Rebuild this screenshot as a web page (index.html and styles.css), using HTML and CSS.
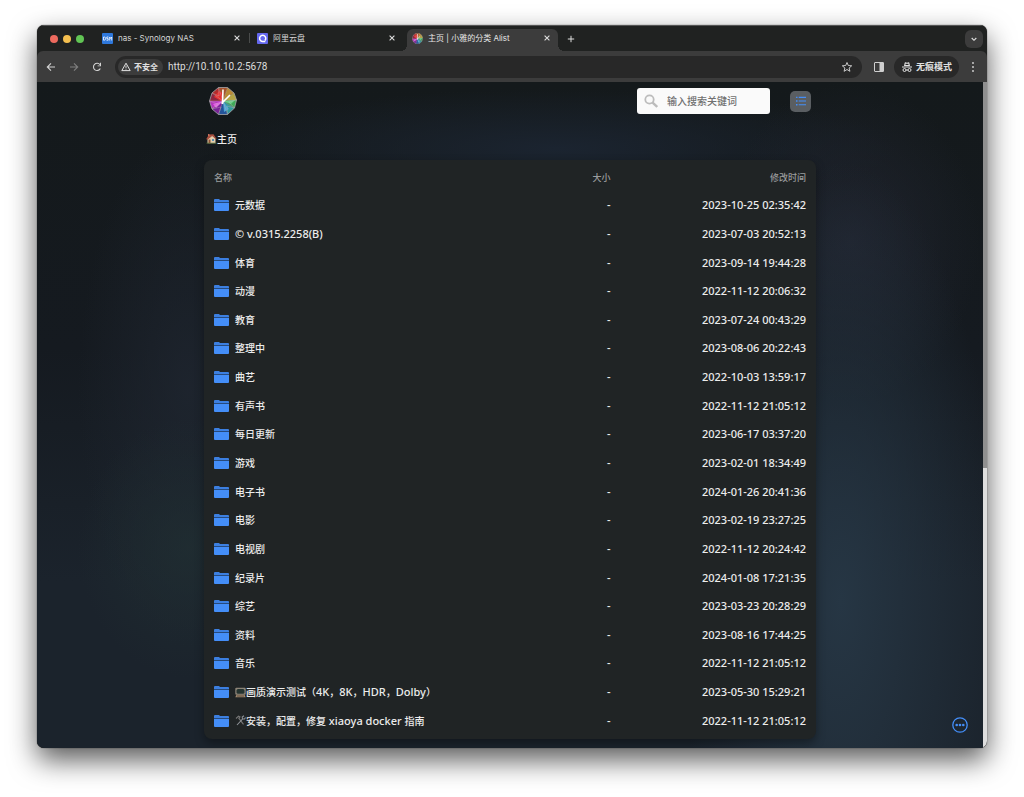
FILE: index.html
```html
<!DOCTYPE html>
<html lang="zh-CN">
<head>
<meta charset="utf-8">
<title>主页 | 小雅的分类 Alist</title>
<meta name="viewport" content="width=device-width, initial-scale=1">
<link rel="stylesheet" href="styles.css">
</head>
<body>
<svg class="sprite" aria-hidden="true">
  <symbol id="folder" viewBox="0 0 15 12"><path fill="#3c7fe0" d="M0 3V1Q0 0 1 0H5L6 1H14Q15 1 15 2V3Z"/><path fill="#264a7d" d="M0 3H15V4H0Z"/><path fill="#448ef8" d="M0 4H15V11Q15 12 14 12H1Q0 12 0 11Z"/></symbol>
  <symbol id="close" viewBox="0 0 10 10"><path d="M2.6 2.6L7.4 7.4M7.4 2.6L2.6 7.4" stroke="#dedede" stroke-width="1.1"/></symbol>
  <symbol id="wheel" viewBox="0 0 28 28">
    <path fill="#a4532c" d="M14 14L9.500 .500L18.500 .500Z"/>
    <path fill="#b98a35" d="M14 14L18.500 .500L25 6Z"/>
    <path fill="#b5a545" d="M14 14L25 6L27.500 13Z"/>
    <path fill="#3fa959" d="M14 14L27.500 13L25.500 21Z"/>
    <path fill="#319a9c" d="M14 14L25.500 21L18.500 27.500Z"/>
    <path fill="#24549a" d="M14 14L18.500 27.500L9.500 27.500Z"/>
    <path fill="#792497" d="M14 14L9.500 27.500L3 22Z"/>
    <path fill="#b534bd" d="M14 14L3 22L.5 14Z"/>
    <path fill="#8d2740" d="M14 14L.5 14L3 6Z"/>
    <path fill="#b22c2c" d="M14 14L3 6L9.500 .500Z"/>
    <path fill="#e83030" d="M14 15L5 10L10 4L14 6Z"/>
    <path fill="#6dd08b" d="M14 14L26 13L22 17Z"/>
    <path fill="#e062e4" d="M14 14L7 21L4 17Z"/>
    <path fill="#4da6d5" d="M14 14L20 22L15 25Z"/>
    <path fill="none" stroke="#c9b9bd" stroke-width=".35" d="M14 14L9.500 .500M14 14L18.500 .500M14 14L25 6M14 14L27.500 13M14 14L25.500 21M14 14L18.500 27.500M14 14L9.500 27.500M14 14L3 22M14 14L.5 14M14 14L3 6M3 6L10 9L9.500 .5M.5 14L9 17L3 22L12 20L9.500 27.500M18.500 27.500L18 19L25.500 21L20 15L27.500 13"/>
    <path fill="none" stroke="#a6a6aa" stroke-width=".8" d="M9.500 .500H18.500L25 6L27.500 13L25.500 21L18.500 27.500H9.500L3 22L.5 14L3 6Z"/>
    <path fill="none" stroke="#fff" stroke-width="1.600" d="M13.500 17L14 2.500M12.500 16.500L21 8"/>
  </symbol>
</svg>

<div class="window">
  <header class="tabbar">
    <div class="lights"><i class="light red"></i><i class="light yellow"></i><i class="light green"></i></div>
    <div class="tabs">
      <div class="tab">
        <svg class="favicon" viewBox="0 0 11 11"><rect width="11" height="11" rx="1" fill="#2e78dc"/><path d="M1.500 4V7.200H2.400Q3.500 7.200 3.500 5.600T2.400 4ZM6.400 4H4.800V5.600H6.200V7.200H4.500M7.700 7.500V4L8.700 5.500L9.700 4V7.500" fill="none" stroke="#fff" stroke-width=".8"/></svg>
        <span class="tab-title">nas - Synology NAS</span>
        <button class="tab-close" aria-label="关闭 nas"><svg viewBox="0 0 10 10"><use href="#close"/></svg></button>
      </div>
      <div class="tab divided">
        <svg class="favicon" viewBox="0 0 11 11"><rect width="11" height="11" rx="1" fill="#6468ee"/><path d="M7.900 7.500A3.100 3.100 0 1 0 6.100 8.400L8.300 8.600" fill="none" stroke="#fff" stroke-width="1.500"/></svg>
        <span class="tab-title">阿里云盘</span>
        <button class="tab-close" aria-label="关闭 阿里云盘"><svg viewBox="0 0 10 10"><use href="#close"/></svg></button>
      </div>
      <div class="tab active">
        <svg class="favicon" viewBox="0 0 28 28"><use href="#wheel"/></svg>
        <span class="tab-title">主页 | 小雅的分类 Alist</span>
        <button class="tab-close" aria-label="关闭 主页"><svg viewBox="0 0 10 10"><use href="#close"/></svg></button>
      </div>
    </div>
    <button class="new-tab" aria-label="新标签页"><svg viewBox="0 0 10 10"><path d="M5 1.800V8.200M1.800 5H8.200" stroke="#dedede" stroke-width="1"/></svg></button>
    <button class="tab-search" aria-label="搜索标签页"><svg viewBox="0 0 10 10"><path d="M2.700 4L5 6.300L7.300 4" fill="none" stroke="#e2e2e2" stroke-width="1.100"/></svg></button>
  </header>

  <div class="toolbar">
    <nav class="history" aria-label="导航">
      <button aria-label="后退"><svg viewBox="0 0 12 12"><path d="M10 6H2.500M6 2.300L2.300 6L6 9.700" fill="none" stroke="#d4d4d4" stroke-width="1.100"/></svg></button>
      <button aria-label="前进"><svg viewBox="0 0 12 12"><path d="M2 6H9.500M6 2.300L9.700 6L6 9.700" fill="none" stroke="#808080" stroke-width="1.100"/></svg></button>
      <button aria-label="刷新"><svg viewBox="0 0 12 12"><path d="M9.300 7.500A3.600 3.600 0 1 1 9 3.800" fill="none" stroke="#d4d4d4" stroke-width="1.100"/><path d="M10 1.800V5.200H6.600V4.400H9V1.800Z" fill="#d4d4d4"/></svg></button>
    </nav>
    <div class="omnibox">
      <button class="security"><svg viewBox="0 0 10 10"><path d="M5 1.200L9.200 8.600H.8Z" fill="none" stroke="#e0e0e0" stroke-linejoin="round"/><path d="M5 3.600V6M5 6.700V7.600" stroke="#e0e0e0" stroke-width=".9"/></svg>不安全</button>
      <input class="url" type="text" aria-label="地址" value="http://10.10.10.2:5678">
      <button class="star" aria-label="收藏"><svg viewBox="0 0 12 12"><path d="M6 1.500L7.300 4.500L10.700 4.800L8.100 7L8.900 10.300L6 8.500L3.100 10.300L3.900 7L1.300 4.800L4.700 4.500Z" fill="none" stroke="#dadada" stroke-width=".9"/></svg></button>
    </div>
    <button class="panel" aria-label="侧边栏"><svg viewBox="0 0 12 12"><rect x="1.500" y="1.500" width="9" height="9" rx=".5" fill="none" stroke="#cfcfcf"/><path d="M6.500 1.500H10.500V10.500H6.500Z" fill="#cfcfcf"/></svg></button>
    <button class="incognito"><svg viewBox="0 0 12 12"><path d="M3 5L3.700 1.800Q3.800 1.200 4.500 1.300L6 1.700L7.500 1.300Q8.200 1.200 8.300 1.800L9 5ZM1 5.400H11V6.400H1Z" fill="#e2e2e2"/><path d="M4.500 3.400H7.500" stroke="#282828" stroke-width="1.400"/><circle cx="3.500" cy="9" r="1.500" fill="none" stroke="#e2e2e2"/><circle cx="8.500" cy="9" r="1.500" fill="none" stroke="#e2e2e2"/><path d="M5 9H7" stroke="#e2e2e2"/></svg>无痕模式</button>
    <button class="menu" aria-label="菜单"><svg viewBox="0 0 12 12" fill="#dadada"><circle cx="6" cy="2" r=".9"/><circle cx="6" cy="6" r=".9"/><circle cx="6" cy="10" r=".9"/></svg></button>
  </div>

  <div class="viewport">
    <div class="page">
      <div class="container">
        <div class="topbar">
          <a href="#" class="logo" aria-label="小雅"><svg viewBox="0 0 28 28"><use href="#wheel"/></svg></a>
          <label class="search">
            <svg viewBox="0 0 14 14"><circle cx="5.500" cy="5.500" r="4.200" fill="none" stroke="#bcbcbc" stroke-width="1.800"/><path d="M8.600 8.600L13.200 13" stroke="#bcbcbc" stroke-width="2.400"/></svg>
            <input type="search" placeholder="输入搜索关键词" aria-label="输入搜索关键词">
          </label>
          <button class="layout" aria-label="切换布局"><svg viewBox="0 0 12 12"><path d="M3.500 1.500H11.500M3.500 5.500H11.500M3.500 9.500H11.500" stroke="#448ef8" stroke-width="1.200"/><path d="M.5 .700H2.200V2.300H.5ZM.5 4.700H2.200V6.300H.5ZM.5 8.700H2.200V10.300H.5Z" fill="#448ef8"/></svg></button>
        </div>
        <nav class="crumbs" aria-label="路径"><a href="#"><svg class="emoji" viewBox="0 0 11 11"><path d="M1.500 5.500L5.500 2L9.500 5.500V10.200H1.500Z" fill="#e3cfae"/><path d="M.3 6L3 1.500L7.500 1.200L10.500 5.800L9.800 6.300L6.200 3L1.300 7Z" fill="#a9503f"/><path d="M2 1H3.400V3H2Z" fill="#c9705c"/><path d="M2.500 6.500H4.500V10.200H2.500Z" fill="#8e5233"/><path d="M6 6H8V8H6Z" fill="#5c8eb0"/><path d="M.5 9.700H10.500V10.500H.5Z" fill="#55753a"/></svg>主页</a></nav>
        <main class="card">
          <table class="files">
            <thead><tr><th scope="col">名称</th><th scope="col">大小</th><th scope="col">修改时间</th></tr></thead>
            <tbody>
              <tr><td><a href="#"><svg class="folder"><use href="#folder"/></svg>元数据</a></td><td>-</td><td>2023-10-25 02:35:42</td></tr>
              <tr><td><a href="#"><svg class="folder"><use href="#folder"/></svg><span class="latin">© v.0315.2258(B)</span></a></td><td>-</td><td>2023-07-03 20:52:13</td></tr>
              <tr><td><a href="#"><svg class="folder"><use href="#folder"/></svg>体育</a></td><td>-</td><td>2023-09-14 19:44:28</td></tr>
              <tr><td><a href="#"><svg class="folder"><use href="#folder"/></svg>动漫</a></td><td>-</td><td>2022-11-12 20:06:32</td></tr>
              <tr><td><a href="#"><svg class="folder"><use href="#folder"/></svg>教育</a></td><td>-</td><td>2023-07-24 00:43:29</td></tr>
              <tr><td><a href="#"><svg class="folder"><use href="#folder"/></svg>整理中</a></td><td>-</td><td>2023-08-06 20:22:43</td></tr>
              <tr><td><a href="#"><svg class="folder"><use href="#folder"/></svg>曲艺</a></td><td>-</td><td>2022-10-03 13:59:17</td></tr>
              <tr><td><a href="#"><svg class="folder"><use href="#folder"/></svg>有声书</a></td><td>-</td><td>2022-11-12 21:05:12</td></tr>
              <tr><td><a href="#"><svg class="folder"><use href="#folder"/></svg>每日更新</a></td><td>-</td><td>2023-06-17 03:37:20</td></tr>
              <tr><td><a href="#"><svg class="folder"><use href="#folder"/></svg>游戏</a></td><td>-</td><td>2023-02-01 18:34:49</td></tr>
              <tr><td><a href="#"><svg class="folder"><use href="#folder"/></svg>电子书</a></td><td>-</td><td>2024-01-26 20:41:36</td></tr>
              <tr><td><a href="#"><svg class="folder"><use href="#folder"/></svg>电影</a></td><td>-</td><td>2023-02-19 23:27:25</td></tr>
              <tr><td><a href="#"><svg class="folder"><use href="#folder"/></svg>电视剧</a></td><td>-</td><td>2022-11-12 20:24:42</td></tr>
              <tr><td><a href="#"><svg class="folder"><use href="#folder"/></svg>纪录片</a></td><td>-</td><td>2024-01-08 17:21:35</td></tr>
              <tr><td><a href="#"><svg class="folder"><use href="#folder"/></svg>综艺</a></td><td>-</td><td>2023-03-23 20:28:29</td></tr>
              <tr><td><a href="#"><svg class="folder"><use href="#folder"/></svg>资料</a></td><td>-</td><td>2023-08-16 17:44:25</td></tr>
              <tr><td><a href="#"><svg class="folder"><use href="#folder"/></svg>音乐</a></td><td>-</td><td>2022-11-12 21:05:12</td></tr>
              <tr><td><a href="#"><svg class="folder"><use href="#folder"/></svg><svg class="emoji" viewBox="0 0 11 11"><rect x=".3" y=".8" width="10.400" height="7" rx="1" fill="#8d8578"/><rect x="1.500" y="2" width="8" height="4.800" rx="1.500" fill="#24332f"/><path d="M1.500 7.800H9.500L10.700 10.300H.3Z" fill="#a28b70"/><path d="M2 9H9" stroke="#5f4b3b"/></svg><span>画质演示测试（<span class="latin">4K</span>，<span class="latin">8K</span>，<span class="latin">HDR</span>，<span class="latin">Dolby</span>）</span></a></td><td>-</td><td>2023-05-30 15:29:21</td></tr>
              <tr><td><a href="#"><svg class="folder"><use href="#folder"/></svg><svg class="emoji" viewBox="0 0 11 11"><path d="M1 3.500L3.500 1.200L5 2L3.800 3.200L8.500 9.300" fill="none" stroke="#777" stroke-width="1.100"/><path d="M2 10L7.500 4L7.200 2L9 .8M7.500 4L9.500 4L10.500 2.500" fill="none" stroke="#8e9297" stroke-width="1.100"/></svg><span>安装，配置，修复<span class="latin"> xiaoya docker </span>指南</span></a></td><td>-</td><td>2022-11-12 21:05:12</td></tr>
            </tbody>
          </table>
        </main>
      </div>
      <button class="more" aria-label="更多"><svg viewBox="0 0 16 16"><circle cx="8" cy="8" r="7.200" fill="none" stroke="#448ef8" stroke-width="1.300"/><g fill="#448ef8"><circle cx="4.700" cy="8" r="1.300"/><circle cx="8" cy="8" r="1.300"/><circle cx="11.300" cy="8" r="1.300"/></g></svg></button>
    </div>
    <div class="scrollbar"><div class="thumb"></div></div>
  </div>
</div>
</body>
</html>
```

FILE: styles.css
```css
* { box-sizing: border-box; }

body {
  margin: 0;
  min-height: 100vh;
  padding: 25px 37px 49px;
  display: flex;
  background: #fff;
  font-family: Inter, "Noto Sans CJK SC", sans-serif;
}

button {
  display: flex;
  align-items: center;
  justify-content: center;
  flex: none;
  margin: 0;
  padding: 0;
  border: 0;
  background: none;
  color: inherit;
  font: inherit;
}

input { border: 0; outline: 0; background: none; padding: 0; min-width: 0; font: inherit; }
a { color: inherit; text-decoration: none; }
svg { display: block; flex: none; }
.sprite { position: absolute; width: 0; height: 0; }

.window {
  flex: 1;
  min-width: 0;
  display: flex;
  flex-direction: column;
  overflow: hidden;
  border-radius: 7px;
  background: #202221;
  box-shadow: 0 0 1px #000, 0 12px 28px rgba(0, 0, 0, .65);
}

/* Tab strip */
.tabbar {
  display: flex;
  align-items: center;
  height: 26px;
  flex: none;
  padding-right: 4px;
  border-top: 1px solid #555;
  color: #d6d6d6;
  font-size: 8px;
}
.lights { display: flex; gap: 5px; width: 60px; flex: none; padding-left: 13px; }
.light { width: 8px; height: 8px; border-radius: 50%; }
.red { background: #ed6a5e; }
.yellow { background: #f4bf4f; }
.green { background: #61c554; }
.tabs { display: flex; gap: 4px; align-self: stretch; align-items: flex-end; min-width: 0; }
.tab {
  position: relative;
  display: flex;
  align-items: center;
  gap: 5px;
  width: 151px;
  min-width: 0;
  height: 22px;
  padding: 0 6px 4px 5px;
}
.tab.active { background: #3c3c3c; border-radius: 6px 6px 0 0; color: #e6e6e6; }
.tab.active::before, .tab.active::after {
  content: "";
  position: absolute;
  bottom: 0;
  width: 6px;
  height: 6px;
}
.tab.active::before { right: 100%; background: radial-gradient(circle at 0 0, transparent 6px, #3c3c3c 6px); }
.tab.active::after { left: 100%; background: radial-gradient(circle at 100% 0, transparent 6px, #3c3c3c 6px); }
.tab.divided::before { content: ""; position: absolute; left: -3px; top: 4px; width: 1px; height: 10px; background: #4a4c4b; }
.favicon { width: 11px; height: 11px; }
.tab-title { flex: 1; min-width: 0; overflow: hidden; white-space: nowrap; line-height: 12px; }
.tab-close, .tab-close svg { width: 10px; height: 10px; }
.new-tab { margin-left: 8px; }
.new-tab svg, .tab-search svg { width: 10px; height: 10px; }
.tab-search { width: 18px; height: 18px; margin-left: auto; border-radius: 6px; background: #3c3c3c; }

/* Address row */
.toolbar {
  display: flex;
  align-items: center;
  height: 31px;
  flex: none;
  padding: 0 8px;
  border-radius: 6px 6px 0 0;
  background: #3c3c3c;
  color: #e0e0e0;
  font-size: 9px;
}
.toolbar svg { width: 12px; height: 12px; }
.history { display: flex; gap: 11px; margin-right: 12px; }
.omnibox {
  flex: 1;
  min-width: 0;
  display: flex;
  align-items: center;
  height: 22px;
  padding: 0 9px 0 3px;
  border-radius: 11px;
  background: #282828;
}
.security { gap: 3px; height: 16px; padding: 0 5px 0 3px; border-radius: 8px; background: #3c3c3c; font-size: 8px; font-weight: 700; }
.toolbar .security svg { width: 10px; height: 10px; }
.url { flex: 1; margin-left: 5px; color: #dcdcdc; font-family: Roboto, sans-serif; font-size: 10px; }
.panel { margin: 0 9px 0 11px; }
.incognito { gap: 3px; height: 22px; padding: 0 7px; border-radius: 11px; background: #282828; font-weight: 700; font-size: 9px; }
.menu { margin-left: 8px; width: 12px; }

/* Page */
.viewport { flex: 1; display: flex; min-height: 0; }
.page {
  position: relative;
  flex: 1;
  min-width: 0;
  display: flex;
  justify-content: center;
  padding: 0 16px 9px;
  background:
    radial-gradient(ellipse 160px 440px at 85% 78%, #263644, rgba(38, 54, 68, 0)),
    radial-gradient(ellipse 130px 160px at 86% 24%, rgba(34, 38, 50, .8), rgba(34, 38, 50, 0)),
    radial-gradient(ellipse 340px 60px at 55% 10%, #1b2430, rgba(27, 36, 48, 0)),
    radial-gradient(ellipse 110px 130px at 16% 70%, rgba(32, 46, 50, .8), rgba(32, 46, 50, 0)),
    radial-gradient(ellipse 110px 260px at 16% 46%, rgba(31, 38, 48, .8), rgba(31, 38, 48, 0)),
    linear-gradient(#14191b, #151a20 40%, #1b232c 75%, #1b232c);
  color: #ececec;
  font-family: "Noto Sans", "Noto Sans CJK SC", sans-serif;
  font-size: 10px;
  font-weight: 500;
}
.container { width: 100%; max-width: 612px; display: flex; flex-direction: column; }
.topbar { display: flex; align-items: center; height: 38px; padding: 0 5px; }
.logo { margin-right: auto; }
.logo svg { width: 28px; height: 28px; }
.search {
  display: flex;
  align-items: center;
  gap: 9px;
  width: 133px;
  height: 26px;
  padding: 0 7px;
  border-radius: 3px;
  background: #fafafa;
}
.search svg { width: 14px; height: 14px; }
.search input { flex: 1; color: #333; }
.search input::placeholder { color: #707070; opacity: 1; }
.layout { width: 21px; height: 21px; margin-left: 20px; border-radius: 5px; background: #5a5e62; }
.layout svg { width: 12px; height: 11px; }
.crumbs { display: flex; align-items: center; height: 36px; margin-bottom: 4px; padding-left: 2px; }
.crumbs a { display: flex; align-items: center; }
.emoji { width: 11px; height: 11px; }

.card {
  flex: 1;
  display: flex;
  padding: 4px;
  border-radius: 8px;
  background: #202425;
  box-shadow: 0 4px 10px rgba(0, 0, 0, .35);
}
.files { flex: 1; display: flex; flex-direction: column; }
.files tbody { flex: 1; display: grid; grid-auto-rows: 1fr; }
.files tr { display: grid; grid-template-columns: 50% 17% 33%; align-items: center; padding: 0 6px; min-height: 24px; }
.files thead tr { height: 26px; margin-bottom: 1px; }
.files th { padding: 0; text-align: right; font-size: 9px; font-weight: 500; color: #9a9c9d; }
.files th:first-child { text-align: left; }
.files td { padding: 0; text-align: right; font-size: 11px; line-height: 16px; white-space: nowrap; }
.files td:first-child { font-size: 10px; }
.files td a { display: flex; align-items: center; }
.files .latin { font-size: 11px; }
.folder { width: 15px; height: 12px; margin-right: 6px; }

.more { position: absolute; right: 15px; bottom: 15px; }
.more svg { width: 16px; height: 16px; }

.scrollbar { width: 4px; flex: none; background: #dedede; }
.thumb { height: 58%; background: #8f8f8f; }
```
